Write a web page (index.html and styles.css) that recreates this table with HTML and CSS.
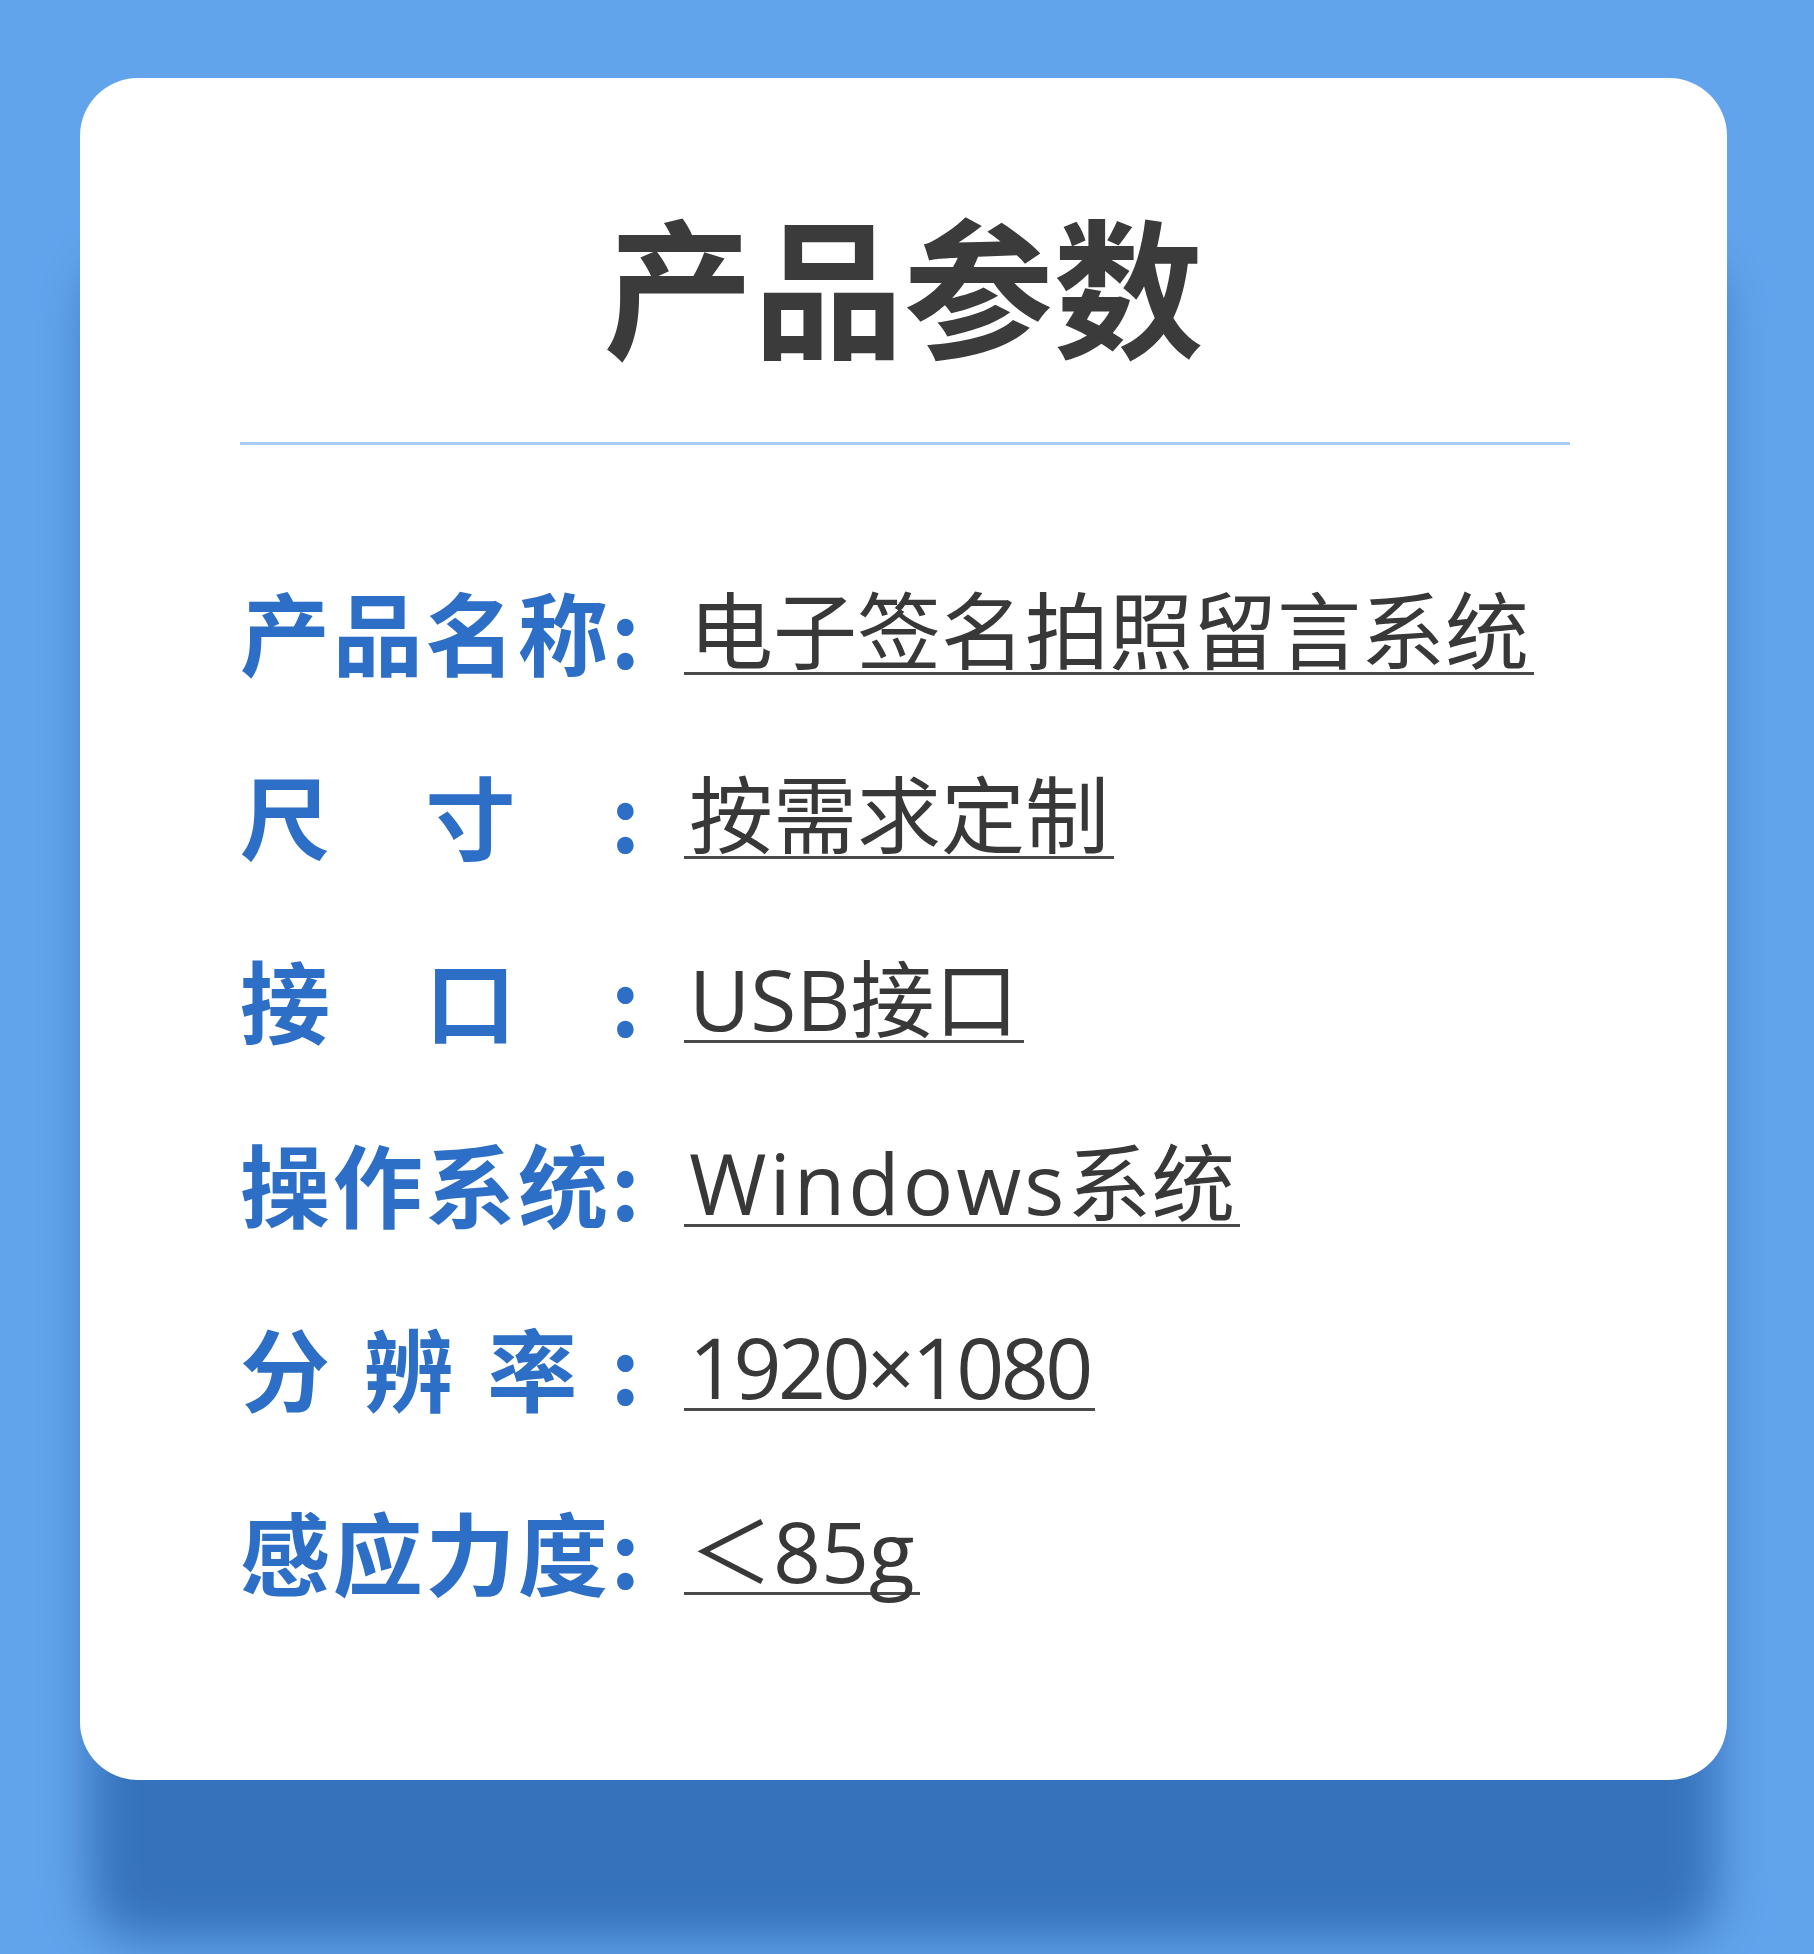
FILE: index.html
```html
<!DOCTYPE html>
<html lang="zh-CN">
<head>
  <meta charset="utf-8">
  <meta name="viewport" content="width=device-width">
  <title>产品参数</title>

  <link rel="stylesheet" href="styles.css">

</head>
<body>
  <div id="page">

    <div class="card">
      <h1 class="title">产品参数</h1>
      <div class="divider"></div>

      <ul class="params">
        <li class="row">
          <span class="label"><span>产</span><span>品</span><span>名</span><span>称</span><span>:</span></span>
          <span class="value">电子签名拍照留言系统</span>
        </li>
        <li class="row">
          <span class="label"><span>尺</span><span>寸</span><span>:</span></span>
          <span class="value">按需求定制</span>
        </li>
        <li class="row">
          <span class="label"><span>接</span><span>口</span><span>:</span></span>
          <span class="value"><span class="latin">USB</span>接口</span>
        </li>
        <li class="row">
          <span class="label"><span>操</span><span>作</span><span>系</span><span>统</span><span>:</span></span>
          <span class="value"><span class="latin wide">Windows</span>系统</span>
        </li>
        <li class="row loose">
          <span class="label"><span>分</span><span>辨</span><span>率</span><span>:</span></span>
          <span class="value"><span class="latin tight">1920×1080</span></span>
        </li>
        <li class="row loose">
          <span class="label"><span>感</span><span>应</span><span>力</span><span>度</span><span>:</span></span>
          <span class="value">＜<span class="latin">85g</span></span>
        </li>
      </ul>
    </div>

  </div>
</body>
</html>
```

FILE: styles.css
```css
* {
  box-sizing: border-box;
}

html, body {
  margin: 0;
  padding: 0;
}

body {
  background: #62a4ec;
  font-family: "Noto Sans CJK SC", "Noto Sans", sans-serif;
  width: 1814px;
  height: 1954px;
  overflow: hidden;
}

#page {
  padding: 78px 87px 0 80px;
}

.card {
  width: 1647px;
  height: 1702px;
  background: #ffffff;
  border-radius: 58px;
  padding: 129px 0 0 160px;
  box-shadow: 0 170px 50px -10px #3672bc;
}

.title {
  margin: 0;
  padding-right: 160px;
  font-size: 150px;
  line-height: 150px;
  font-weight: 700;
  color: #3b3b3b;
  text-align: center;
}

.divider {
  margin-top: 85px;
  width: 1330px;
  height: 3px;
  background: #a8ccf3;
}

.params {
  margin: 135px 0 0 0;
  padding: 0;
  list-style: none;
}

.row {
  display: flex;
  align-items: center;
  height: 100px;
  margin-bottom: 84px;
}

.row.loose {
  margin-top: 11px;
}

.label {
  display: flex;
  justify-content: space-between;
  width: 400px;
  font-size: 90px;
  line-height: 100px;
  font-weight: 700;
  color: #2d6fc6;
}

.value {
  margin-left: 44px;
  padding: 0 5px 3px 5px;
  font-size: 84px;
  line-height: 84px;
  font-weight: 400;
  color: #383838;
  border-bottom: 3px solid #4a4a4a;
}

.latin {
  font-family: "Open Sans", "Noto Sans CJK SC", sans-serif;
  line-height: 60px;
}

.latin.wide {
  letter-spacing: 3px;
}

.latin.tight {
  letter-spacing: -3.5px;
}
```
